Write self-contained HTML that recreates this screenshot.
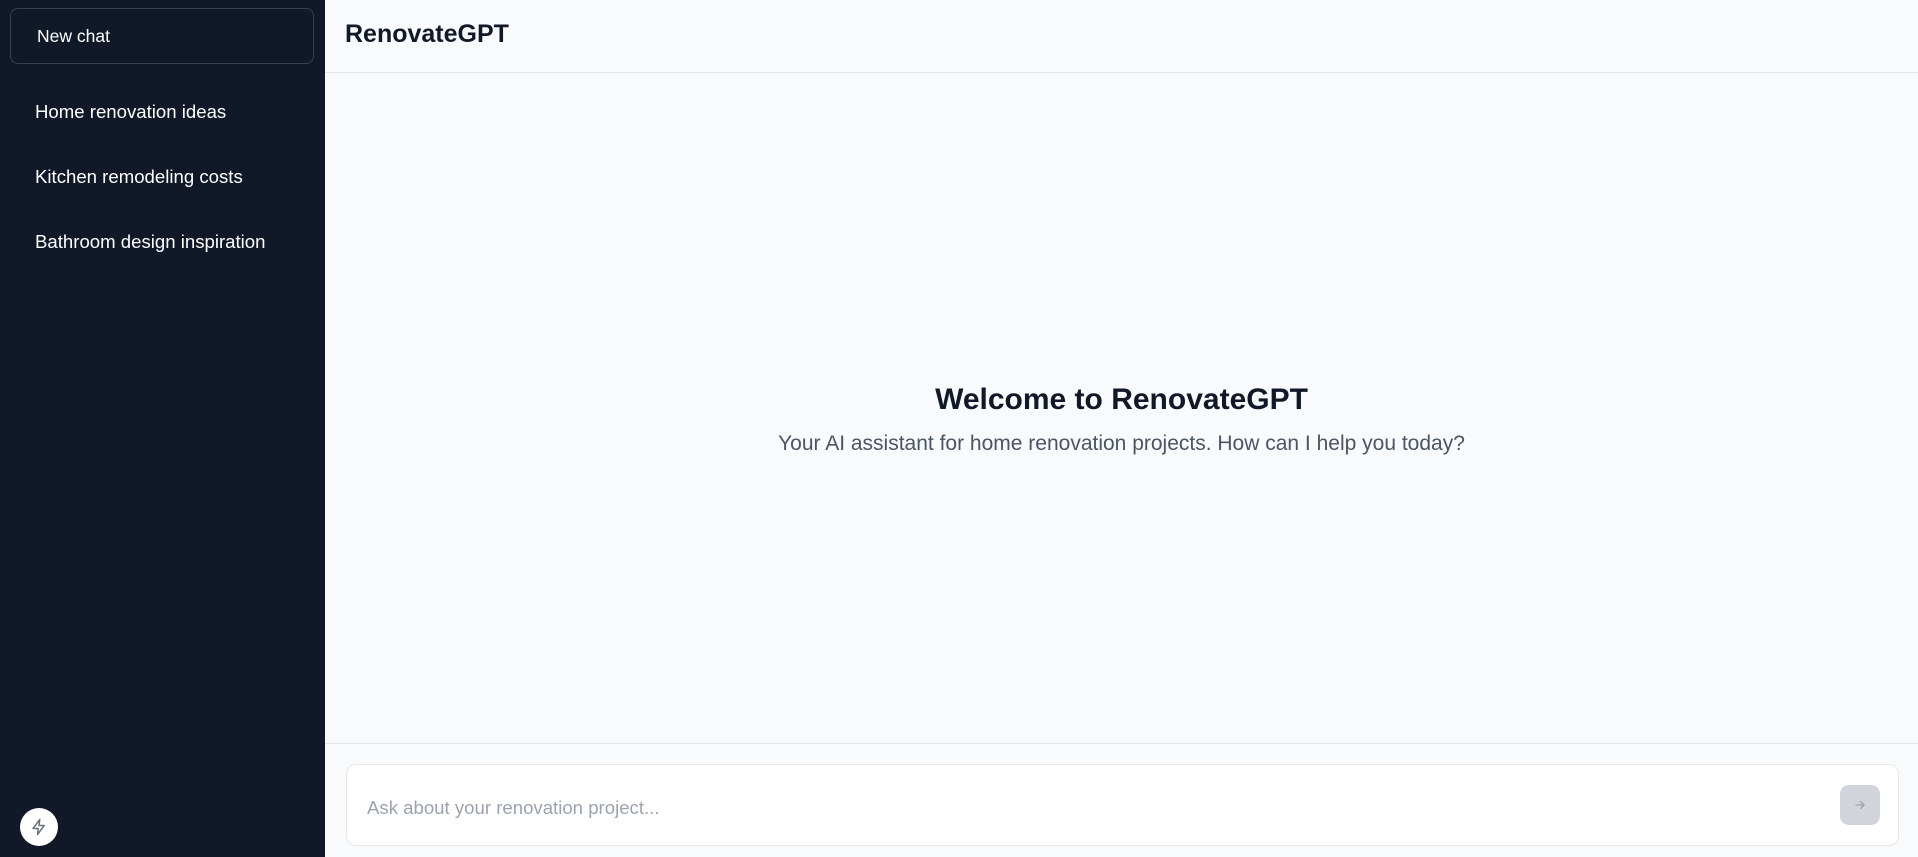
<!DOCTYPE html>
<html><head><meta charset="utf-8"><style>
*{box-sizing:border-box;margin:0;padding:0}
body{width:1918px;height:857px;overflow:hidden;font-family:"Liberation Sans",sans-serif;background:#f9fafb;position:relative}
.side{position:absolute;left:0;top:0;width:325px;height:857px;background:#111827;color:#fff}
.nc{position:absolute;left:10px;top:8px;width:304px;height:56px;border:1px solid #374151;border-radius:8px;font-size:17.5px;padding-left:26px;line-height:54px}
.item{position:absolute;left:35px;font-size:18.6px}
.bolt{position:absolute;left:20px;top:808px;width:38px;height:38px;border-radius:50%;background:#fff;display:flex;align-items:center;justify-content:center}
.hdr{position:absolute;left:325px;top:0;right:0;height:73px;border-bottom:1px solid #e5e7eb}
.hdr h1{position:absolute;left:20px;top:20px;font-size:25px;font-weight:bold;color:#111827}
.wel{position:absolute;left:325px;right:0;top:383px;text-align:center}
.wel h2{font-size:30px;font-weight:bold;color:#111827}
.wel p{margin-top:15px;font-size:21px;color:#4b5563}
.foot{position:absolute;left:325px;right:0;top:743px;border-top:1px solid #e5e7eb}
.inp{position:absolute;left:346px;top:764px;width:1553px;height:82px;background:#fff;border:1px solid #e5e7eb;border-radius:10px}
.inp span{position:absolute;left:20px;top:32px;font-size:18.6px;color:#9ca3af}
.btn{position:absolute;left:1493px;top:20px;width:40px;height:40px;border-radius:9px;background:#d1d5db;display:flex;align-items:center;justify-content:center}
</style></head><body>
<div class="side">
<div class="nc">New chat</div>
<div class="item" style="top:101px">Home renovation ideas</div>
<div class="item" style="top:166px">Kitchen remodeling costs</div>
<div class="item" style="top:231px">Bathroom design inspiration</div>
<div class="bolt"><svg width="18" height="18" viewBox="0 0 24 24" fill="none" stroke="#6b7280" stroke-width="2" stroke-linejoin="round"><path d="M13 2 4 14h7l-1 8 9-12h-7z"/></svg></div>
</div>
<div class="hdr"><h1>RenovateGPT</h1></div>
<div class="wel"><h2>Welcome to RenovateGPT</h2><p>Your AI assistant for home renovation projects. How can I help you today?</p></div>
<div class="foot"></div>
<div class="inp"><span>Ask about your renovation project...</span>
<div class="btn"><svg width="14" height="14" viewBox="0 0 24 24" fill="none" stroke="#9ca3af" stroke-width="2.2" stroke-linecap="round" stroke-linejoin="round"><path d="M5 12h14M13 6l6 6-6 6"/></svg></div></div>
</body></html>
